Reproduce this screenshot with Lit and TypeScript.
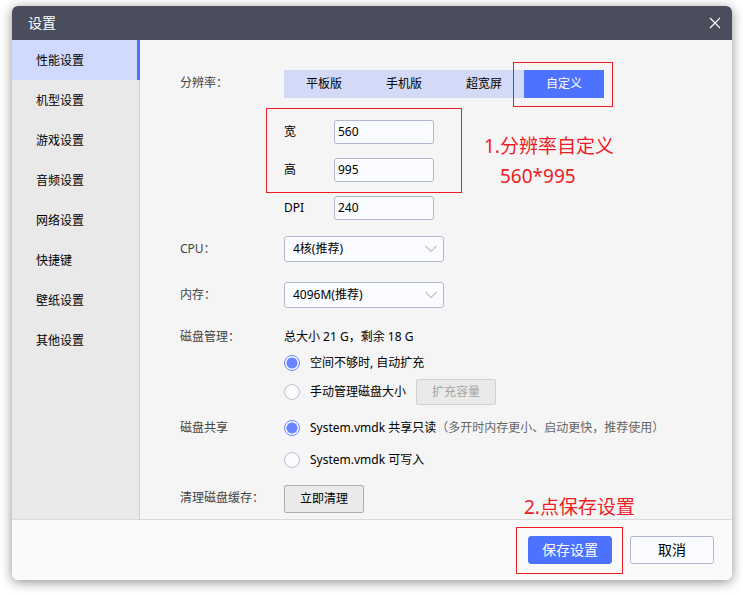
import { LitElement, html, css } from "lit";
import { customElement, state } from "lit/decorators.js";
import { classMap } from "lit/directives/class-map.js";

const SECTIONS = [
  "性能设置",
  "机型设置",
  "游戏设置",
  "音频设置",
  "网络设置",
  "快捷键",
  "壁纸设置",
  "其他设置",
];

const MODES = ["平板版", "手机版", "超宽屏", "自定义"];

@customElement("app-root")
export class AppRoot extends LitElement {
  @state() private section = 0;
  @state() private mode = 3;

  static styles = css`
    :host {
      display: flex;
      box-sizing: border-box;
      min-height: 100vh;
      padding: 6px 11px 15px 12px;
      background: #fff;
      color: #000;
      font: 12px/20px "Noto Sans", "Noto Sans CJK SC", sans-serif;
    }
    *,
    *::before,
    *::after {
      box-sizing: border-box;
    }
    button,
    input,
    select {
      font: inherit;
      color: inherit;
      margin: 0;
      padding: 0;
    }
    .window {
      flex: 1;
      min-width: 0;
      display: flex;
      flex-direction: column;
      border-radius: 6px;
      background: #fafafa;
      box-shadow: 0 2px 12px rgba(0, 0, 0, 0.45);
    }
    .titlebar {
      display: flex;
      align-items: center;
      justify-content: space-between;
      height: 34px;
      padding: 0 10px 0 16px;
      border-radius: 6px 6px 0 0;
      background: #4a4e5c;
      color: #fff;
    }
    .title {
      margin: 0;
      font-size: 14px;
      font-weight: 400;
    }
    .close {
      display: flex;
      align-items: center;
      justify-content: center;
      width: 14px;
      height: 20px;
      border: 0;
      background: none;
    }
    .body {
      flex: 1;
      display: flex;
    }
    .sidebar {
      flex: none;
      width: 128px;
      background: #e9e9e9;
      border-right: 1px solid #d0d0d0;
    }
    .tab {
      display: block;
      width: 127px;
      height: 40px;
      padding: 2px 0 0 24px;
      border: 0;
      background: none;
      text-align: left;
    }
    .tab.active {
      width: 128px;
      background: #d0daff;
      border-right: 3px solid #4d72ff;
    }
    .main {
      flex: 1;
      min-width: 0;
      padding: 30px 16px 5px 40px;
      background: #f5f5f5;
    }
    .row {
      display: grid;
      grid-template-columns: 104px 1fr;
      margin-bottom: 20px;
    }
    .row.tight {
      margin-bottom: 16px;
    }
    .row.near {
      margin-bottom: 10px;
    }
    .row.last {
      margin: 12px 0 0;
    }
    .label {
      line-height: 26px;
      color: #444;
    }
    .segments {
      display: inline-flex;
      background: #d2daf7;
      margin-bottom: 22px;
    }
    .segment-slot {
      position: relative;
    }
    .segment {
      display: block;
      width: 80px;
      height: 28px;
      border: 0;
      background: none;
    }
    .segment.active {
      background: #4d72ff;
      color: #fff;
    }
    .mark {
      position: absolute;
      border: 1px solid #ee1c25;
      pointer-events: none;
    }
    .mark.on-mode {
      inset: -8px -9px -9px -11px;
    }
    .mark.on-size {
      inset: -12px -28px -11px -18px;
    }
    .mark.on-save {
      inset: -9px -11px -10px -12px;
    }
    .note {
      position: absolute;
      margin: 0;
      color: #ee1c25;
      font-size: 19px;
      line-height: 30px;
      white-space: pre;
      pointer-events: none;
    }
    .note.step-one {
      left: 200px;
      top: 11px;
    }
    .note .indent {
      padding-left: 16px;
    }
    .note.step-two {
      left: -4px;
      bottom: 42px;
    }
    .size {
      position: relative;
      display: grid;
      gap: 14px;
      width: 150px;
      margin-bottom: 14px;
    }
    .field {
      display: flex;
      align-items: center;
      width: 150px;
    }
    .field span {
      width: 50px;
    }
    .field input {
      width: 100px;
      height: 24px;
      padding: 0 3px 2px;
      border: 1px solid #b4b8ce;
      border-radius: 3px;
      background: #fafbff;
    }
    .picker {
      position: relative;
      width: 160px;
    }
    .picker select {
      display: block;
      appearance: none;
      width: 100%;
      height: 26px;
      padding: 0 24px 0 8px;
      border: 1px solid #b4b8ce;
      border-radius: 3px;
      background: #fafbff;
    }
    .picker svg {
      position: absolute;
      right: 7px;
      top: 9px;
      pointer-events: none;
    }
    .line {
      display: flex;
      align-items: center;
      gap: 10px;
      min-height: 26px;
    }
    .stack {
      display: grid;
    }
    .stack.loose {
      gap: 6px;
    }
    .stack .late {
      margin-top: 3px;
    }
    .choice {
      display: flex;
      align-items: center;
      gap: 10px;
    }
    .choice input {
      appearance: none;
      flex: none;
      width: 16px;
      height: 16px;
      border: 1px solid #bcbfd4;
      border-radius: 50%;
      background: #fafbff;
    }
    .choice input:checked {
      border-color: #6885ff;
      background: radial-gradient(circle, #6885ff 5px, #fafbff 6px);
    }
    .hint {
      color: #666;
    }
    .plain {
      display: block;
      width: 80px;
      height: 28px;
      border: 1px solid #adadad;
      border-radius: 2px;
      background: #eaeaea;
    }
    .plain:disabled {
      height: 26px;
      border-color: #d0d0d0;
      color: #a6a6a6;
    }
    .footer {
      display: flex;
      justify-content: flex-end;
      gap: 18px;
      padding: 16px 18px;
      border-top: 1px solid #dadada;
      border-radius: 0 0 6px 6px;
      background: #fafafa;
    }
    .save-slot {
      position: relative;
    }
    .action {
      display: block;
      width: 84px;
      height: 28px;
      border: 1px solid #b4b8ce;
      border-radius: 3px;
      background: #fafbff;
      font-size: 14px;
    }
    .action.primary {
      border-color: #4d72ff;
      background: #4d72ff;
      color: #fff;
    }
  `;

  private chevron() {
    return html`<svg width="12" height="8" viewBox="0 0 12 8" fill="none" aria-hidden="true">
      <path d="M0.5 1 L6 6.5 L11.5 1" stroke="#999ca8" />
    </svg>`;
  }

  render() {
    return html`
      <div class="window">
        <header class="titlebar">
          <h1 class="title">设置</h1>
          <button class="close" aria-label="关闭">
            <svg width="12" height="12" viewBox="0 0 12 12" fill="none">
              <path d="M1 1 L11 11 M11 1 L1 11" stroke="#fff" stroke-width="1.1" />
            </svg>
          </button>
        </header>

        <div class="body">
          <nav class="sidebar">
            ${SECTIONS.map(
              (name, i) => html`<button
                class=${classMap({ tab: true, active: i === this.section })}
                @click=${() => (this.section = i)}
              >${name}</button>`
            )}
          </nav>

          <main class="main">
            <div class="row tight">
              <span class="label">分辨率：</span>
              <div>
                <div class="segments">
                  ${MODES.map(
                    (name, i) => html`<div class="segment-slot">
                      <button
                        class=${classMap({ segment: true, active: i === this.mode })}
                        @click=${() => (this.mode = i)}
                      >${name}</button>
                      ${i === 3 ? html`<div class="mark on-mode"></div>` : ""}
                    </div>`
                  )}
                </div>
                <div class="size">
                  <label class="field"><span>宽</span><input type="text" value="560" /></label>
                  <label class="field"><span>高</span><input type="text" value="995" /></label>
                  <div class="mark on-size"></div>
                  <p class="note step-one">1.分辨率自定义<br /><span class="indent">560*995</span></p>
                </div>
                <label class="field"><span>DPI</span><input type="text" value="240" /></label>
              </div>
            </div>

            <div class="row">
              <label class="label" for="cpu">CPU：</label>
              <div class="picker">
                <select id="cpu"><option>4核(推荐)</option></select>
                ${this.chevron()}
              </div>
            </div>

            <div class="row tight">
              <label class="label" for="memory">内存：</label>
              <div class="picker">
                <select id="memory"><option>4096M(推荐)</option></select>
                ${this.chevron()}
              </div>
            </div>

            <div class="row near">
              <span class="label">磁盘管理：</span>
              <div class="stack">
                <div class="line">总大小 21 G，剩余 18 G</div>
                <div class="line">
                  <label class="choice"><input type="radio" name="disk" checked />空间不够时, 自动扩充</label>
                </div>
                <div class="line late">
                  <label class="choice"><input type="radio" name="disk" />手动管理磁盘大小</label>
                  <button class="plain" disabled>扩充容量</button>
                </div>
              </div>
            </div>

            <div class="row near">
              <span class="label">磁盘共享</span>
              <div class="stack loose">
                <div class="line">
                  <label class="choice"
                    ><input type="radio" name="share" checked /><span
                      >System.vmdk 共享只读<span class="hint">（多开时内存更小、启动更快，推荐使用）</span></span
                    ></label
                  >
                </div>
                <div class="line">
                  <label class="choice"><input type="radio" name="share" />System.vmdk 可写入</label>
                </div>
              </div>
            </div>

            <div class="row last">
              <span class="label">清理磁盘缓存：</span>
              <button class="plain">立即清理</button>
            </div>
          </main>
        </div>

        <footer class="footer">
          <div class="save-slot">
            <button class="action primary">保存设置</button>
            <div class="mark on-save"></div>
            <p class="note step-two">2.点保存设置</p>
          </div>
          <button class="action">取消</button>
        </footer>
      </div>
    `;
  }
}
